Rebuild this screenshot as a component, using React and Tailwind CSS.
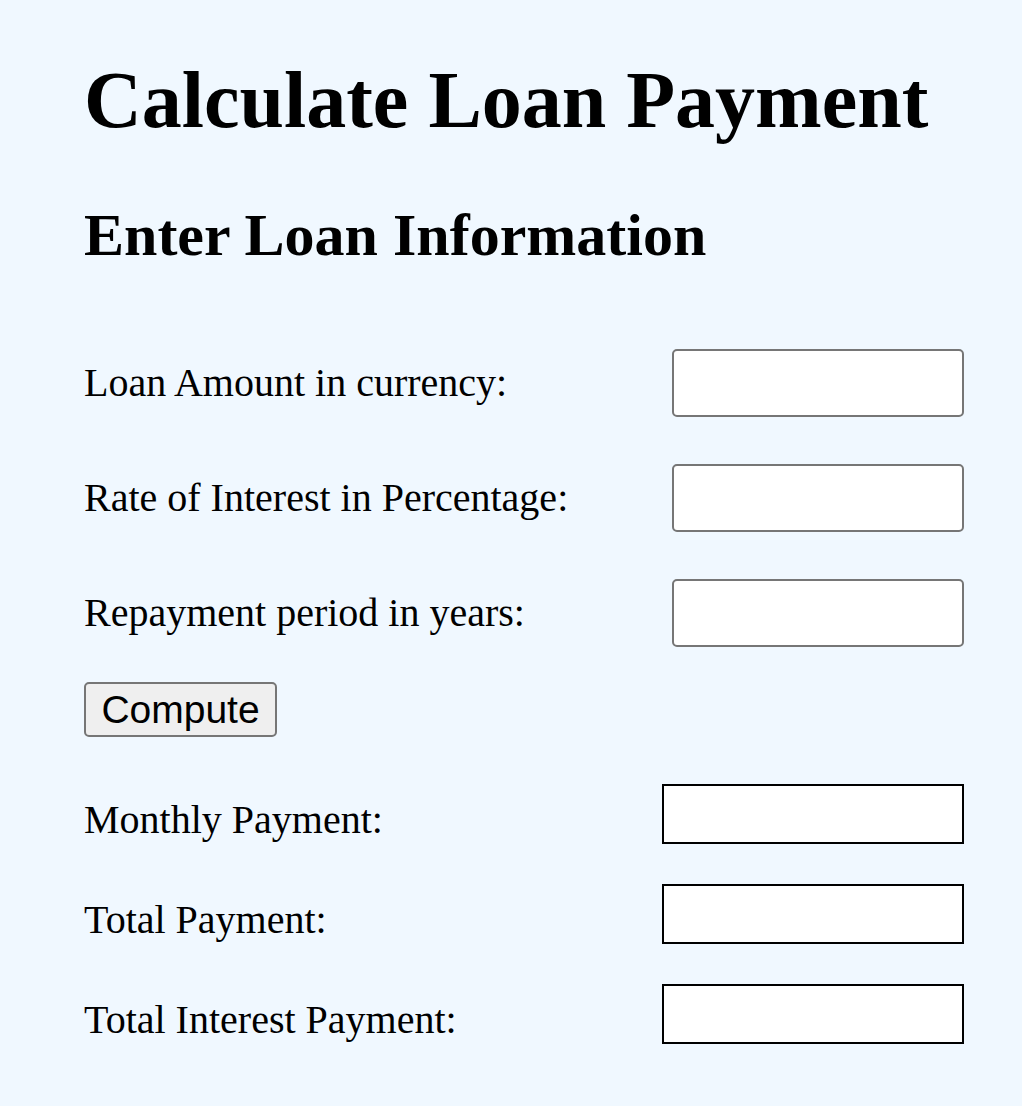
export default function App() {
    const inputs = [
        'Loan Amount in currency:',
        'Rate of Interest in Percentage:',
        'Repayment period in years:',
    ];
    const outputs = ['Monthly Payment:', 'Total Payment:', 'Total Interest Payment:'];

    return (
        <div className="min-h-[1106px] bg-[#f0f8ff] pl-[84px] pr-[58px] pt-[54px] text-black font-['Liberation_Serif',serif]">
            <h1 className="text-[80px] leading-[92px] font-bold">Calculate Loan Payment</h1>
            <h2 className="mt-[55px] mb-[-3px] text-[60px] leading-[69px] font-bold">Enter Loan Information</h2>

            {/* Loan inputs */}
            <div className="mt-[82px] flex flex-col gap-[47px]">
                {inputs.map((label) => (
                    <div key={label} className="flex items-center justify-between">
                        <label className="text-[40px] leading-[46px]">{label}</label>
                        <input
                            type="text"
                            className="w-[292px] h-[68px] bg-white border-2 border-[#767676] rounded-[5px] px-2 text-[40px] outline-none"
                        />
                    </div>
                ))}
            </div>

            <button className="mt-[35px] w-[193px] h-[55px] bg-[#efefef] border-2 border-[#767676] rounded-[5px] text-[39px] leading-[46px] font-['Liberation_Sans',Arial,sans-serif] flex items-center justify-center">
                Compute
            </button>

            {/* Results */}
            <div className="mt-[47px] flex flex-col gap-[40px]">
                {outputs.map((label) => (
                    <div key={label} className="flex items-center justify-between">
                        <label className="pt-[11px] text-[40px] leading-[46px]">{label}</label>
                        <div className="w-[302px] h-[60px] bg-white border-2 border-black" />
                    </div>
                ))}
            </div>
        </div>
    );
}
